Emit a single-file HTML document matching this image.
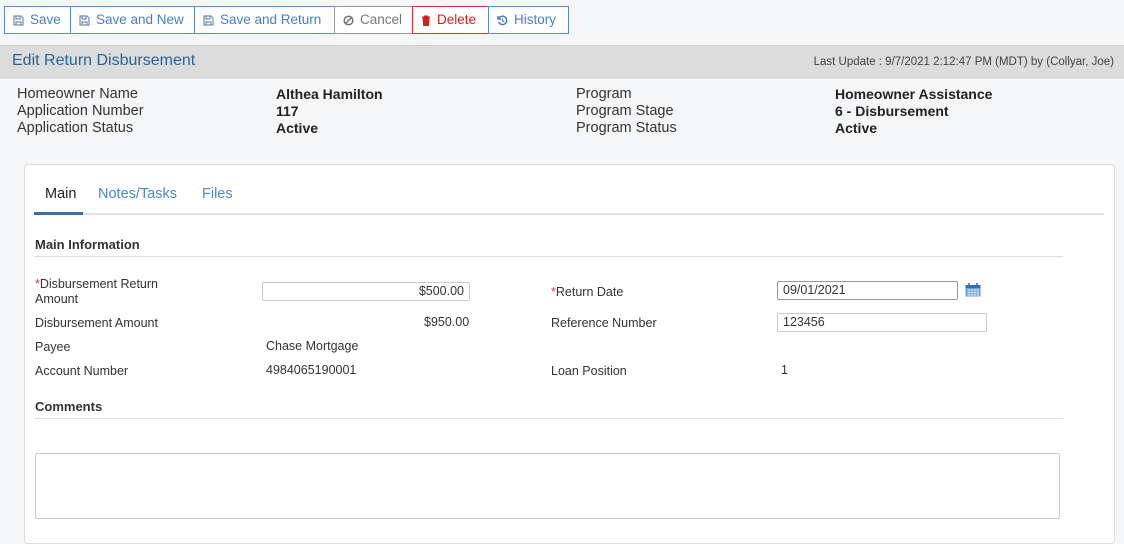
<!DOCTYPE html>
<html><head><meta charset="utf-8"><style>
*{box-sizing:border-box;margin:0;padding:0}
body{width:1124px;height:536px;overflow:hidden;background:#f5f6f8;font-family:"Liberation Sans",sans-serif;color:#333;position:relative}
.a{position:absolute;white-space:nowrap}
.tb{position:absolute;top:6px;height:28px;border:1px solid #5b8fcb;background:#fff;color:#4a7fc0;font-size:13.5px;line-height:26px;padding:0 8px;display:flex;align-items:center;gap:6px;white-space:nowrap;overflow:hidden}
.hdr{position:absolute;left:0;top:45px;width:1124px;height:34px;background:#dcdcdc;border-top:1px solid #d0d0d0}
.k{font-size:14.5px;color:#333}
.v{font-size:14px;font-weight:bold;color:#222}
.l{font-size:12.5px;color:#333}
.inp{position:absolute;height:19px;background:#fff;border:1px solid #ccc;border-radius:2px;font-size:12.5px;line-height:17px;padding:0 5px}
.req{color:#d33}
</style></head><body>
<div class="tb" style="left:4px;width:67px"><svg width="11" height="11" viewBox="0 0 11 11"><path d="M1 1h7l2 2v7H1z M3 1v3h4V1 M3 10V7h5v3" fill="none" stroke="#6f8fb5" stroke-width="1.2"/></svg>Save</div>
<div class="tb" style="left:70px;width:125px"><svg width="11" height="11" viewBox="0 0 11 11"><path d="M1 1h7l2 2v7H1z M3 1v3h4V1 M3 10V7h5v3" fill="none" stroke="#6f8fb5" stroke-width="1.2"/></svg>Save and New</div>
<div class="tb" style="left:194px;width:141px"><svg width="11" height="11" viewBox="0 0 11 11"><path d="M1 1h7l2 2v7H1z M3 1v3h4V1 M3 10V7h5v3" fill="none" stroke="#6f8fb5" stroke-width="1.2"/></svg>Save and Return</div>
<div class="tb" style="left:334px;width:79px;border-color:#999;color:#777"><svg width="11" height="11" viewBox="0 0 11 11"><circle cx="5.5" cy="5.5" r="4.3" fill="none" stroke="#777" stroke-width="1.5"/><path d="M2.5 8.5l6-6" stroke="#777" stroke-width="1.5"/></svg>Cancel</div>
<div class="tb" style="left:412px;width:77px;border-color:#d33;color:#c22"><svg width="10" height="11" viewBox="0 0 10 11"><path d="M1 2h8M3.5 2V1h3v1M2 3h6l-.6 7.5H2.6z" fill="#c22" stroke="#c22"/></svg>Delete</div>
<div class="tb" style="left:488px;width:81px"><svg width="11" height="11" viewBox="0 0 11 11"><path d="M2 3A4.2 4.2 0 1 1 1.6 7" fill="none" stroke="#4a7fc0" stroke-width="1.5"/><path d="M1 1v3h3" fill="none" stroke="#4a7fc0" stroke-width="1.5"/><path d="M5.5 3.5v2.3l1.5 1" fill="none" stroke="#4a7fc0" stroke-width="1.2"/></svg>History</div>
<div class="hdr"></div>
<div class="a" style="left:12px;top:52px;font-size:16px;color:#2a6496">Edit Return Disbursement</div>
<div class="a" style="right:10px;top:56px;font-size:11.5px;color:#444">Last Update : 9/7/2021 2:12:47 PM (MDT) by (Collyar, Joe)</div>
<div class="a k" style="left:17px;top:86px;line-height:17px">Homeowner Name<br>Application Number<br>Application Status</div>
<div class="a v" style="left:276px;top:86px;line-height:17px">Althea Hamilton<br>117<br>Active</div>
<div class="a k" style="left:576px;top:86px;line-height:17px">Program<br>Program Stage<br>Program Status</div>
<div class="a v" style="left:835px;top:86px;line-height:17px">Homeowner Assistance<br>6 - Disbursement<br>Active</div>
<div class="a" style="left:24px;top:164px;width:1091px;height:380px;background:#fff;border:1px solid #ddd;border-radius:4px"></div>
<div class="a" style="left:45px;top:186px;font-size:14.5px;color:#222">Main</div>
<div class="a" style="left:98px;top:186px;font-size:14.5px;color:#4a8ac9">Notes/Tasks</div>
<div class="a" style="left:202px;top:186px;font-size:14.5px;color:#4a8ac9">Files</div>
<div class="a" style="left:34px;top:213px;width:1070px;height:2px;background:#e4e4e4"></div>
<div class="a" style="left:34px;top:212px;width:49px;height:3px;background:#3a70b0"></div>
<div class="a" style="left:35px;top:237px;font-size:13px;font-weight:bold;color:#333">Main Information</div>
<div class="a" style="left:34px;top:256px;width:1029px;height:1px;background:#e0e0e0"></div>
<div class="a l" style="left:35px;top:277px;line-height:15px"><span class="req">*</span>Disbursement Return<br>Amount</div>
<div class="inp" style="left:262px;top:282px;width:208px;text-align:right">$500.00</div>
<div class="a l" style="left:35px;top:316px">Disbursement Amount</div>
<div class="a l" style="left:424px;top:315px">$950.00</div>
<div class="a l" style="left:35px;top:340px">Payee</div>
<div class="a l" style="left:266px;top:339px">Chase Mortgage</div>
<div class="a l" style="left:35px;top:364px">Account Number</div>
<div class="a l" style="left:266px;top:363px">4984065190001</div>
<div class="a l" style="left:551px;top:285px"><span class="req">*</span>Return Date</div>
<div class="inp" style="left:777px;top:281px;width:181px;border-color:#999">09/01/2021</div>
<svg class="a" style="left:965px;top:283px" width="16" height="14" viewBox="0 0 16 14"><rect x="0.5" y="2" width="15" height="11.5" fill="#6d9fd8"/><rect x="0.5" y="2" width="15" height="3" fill="#2f6db5"/><path d="M4 0v3M12 0v3" stroke="#2f6db5" stroke-width="1.5"/><path d="M2 7h12M2 9.5h12M2 12h12M4 6v7M7 6v7M10 6v7M13 6v7" stroke="#fff" stroke-width=".6"/></svg>
<div class="a l" style="left:551px;top:316px">Reference Number</div>
<div class="inp" style="left:777px;top:313px;width:210px">123456</div>
<div class="a l" style="left:551px;top:364px">Loan Position</div>
<div class="a l" style="left:781px;top:363px">1</div>
<div class="a" style="left:35px;top:399px;font-size:13px;font-weight:bold;color:#333">Comments</div>
<div class="a" style="left:34px;top:418px;width:1029px;height:1px;background:#e0e0e0"></div>
<div class="a" style="left:35px;top:453px;width:1025px;height:66px;border:1px solid #ccc;border-radius:2px;background:#fff"></div>
</body></html>
